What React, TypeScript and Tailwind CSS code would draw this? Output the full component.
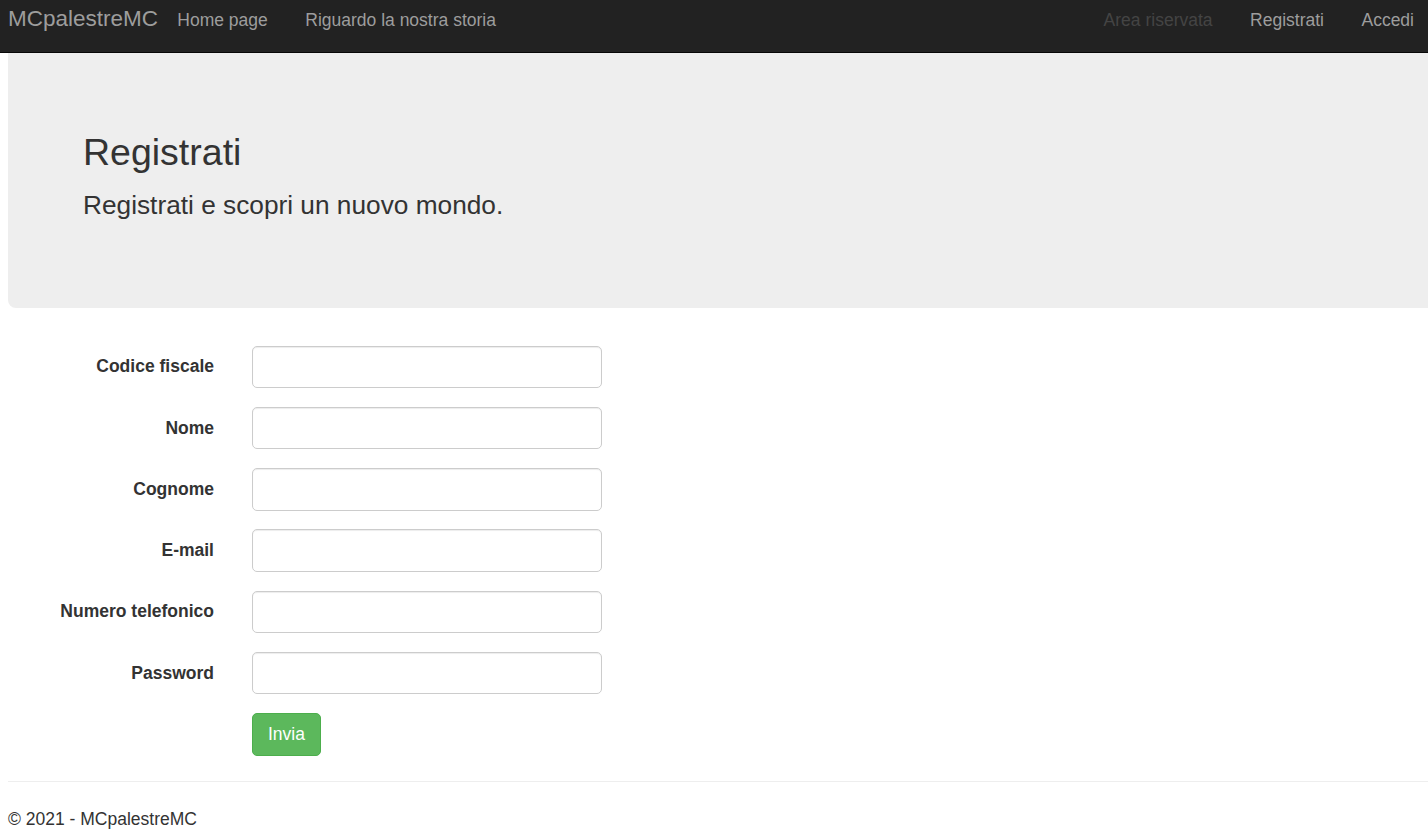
import React from "react";

const fields = [
  "Codice fiscale",
  "Nome",
  "Cognome",
  "E-mail",
  "Numero telefonico",
  "Password",
];

export default function App() {
  return (
    <div
      className="min-h-[837px] bg-white text-[#333] text-[17.5px] leading-[25px] overflow-hidden"
      style={{ fontFamily: '"Liberation Sans", Arial, Helvetica, sans-serif' }}
    >
      {/* Navbar */}
      <nav className="h-[53px] bg-[#222] border-b border-[#080808] flex items-start justify-between">
        <div className="flex items-start">
          <span className="pl-[8px] pt-[6px] text-[22.5px] leading-[25px] text-[#9d9d9d]">
            MCpalestreMC
          </span>
          <a className="ml-[0.5px] px-[18.75px] pt-[8px] text-[#9d9d9d]">Home page</a>
          <a className="px-[18.75px] pt-[8px] text-[#9d9d9d]">Riguardo la nostra storia</a>
        </div>
        <div className="flex items-start pr-[14px]">
          <a className="px-[18.75px] pt-[8px] text-[#444]">Area riservata</a>
          <a className="px-[18.75px] pt-[8px] text-[#9d9d9d]">Registrati</a>
          <a className="pl-[18.75px] pt-[8px] text-[#9d9d9d]">Accedi</a>
        </div>
      </nav>

      {/* Jumbotron */}
      <div className="ml-[8px] bg-[#eee] rounded-bl-[8px] pl-[75px] pt-[79px] pb-[83px]">
        <h1 className="text-[37.5px] leading-[41px] font-normal text-[#333] mb-[14px]">
          Registrati
        </h1>
        <p className="text-[26.25px] leading-[37.5px] text-[#333]">
          Registrati e scopri un nuovo mondo.
        </p>
      </div>

      {/* Form */}
      <form className="mt-[38px] ml-[8px] flex flex-col gap-[18.75px]">
        {fields.map((f) => (
          <div key={f} className="flex items-center">
            <label className="w-[206px] text-right font-bold text-[17.5px] leading-[25px] text-[#333]">
              {f}
            </label>
            <input
              type={f === "Password" ? "password" : "text"}
              className="ml-[38px] w-[350px] h-[42.5px] border border-[#ccc] rounded-[5px] bg-white px-[15px] outline-none shadow-[inset_0_1px_1px_rgba(0,0,0,0.075)]"
            />
          </div>
        ))}
        <div className="flex">
          <button
            type="button"
            className="ml-[244px] h-[42.5px] px-[15px] bg-[#5cb85c] border border-[#4cae4c] rounded-[5px] text-white text-[17.5px] leading-[25px]"
          >
            Invia
          </button>
        </div>
      </form>

      <hr className="ml-[8px] mt-[25px] mb-[25px] border-0 border-t border-[#eee]" />

      <footer className="ml-[8px]">
        <p>© 2021 - MCpalestreMC</p>
      </footer>
    </div>
  );
}
